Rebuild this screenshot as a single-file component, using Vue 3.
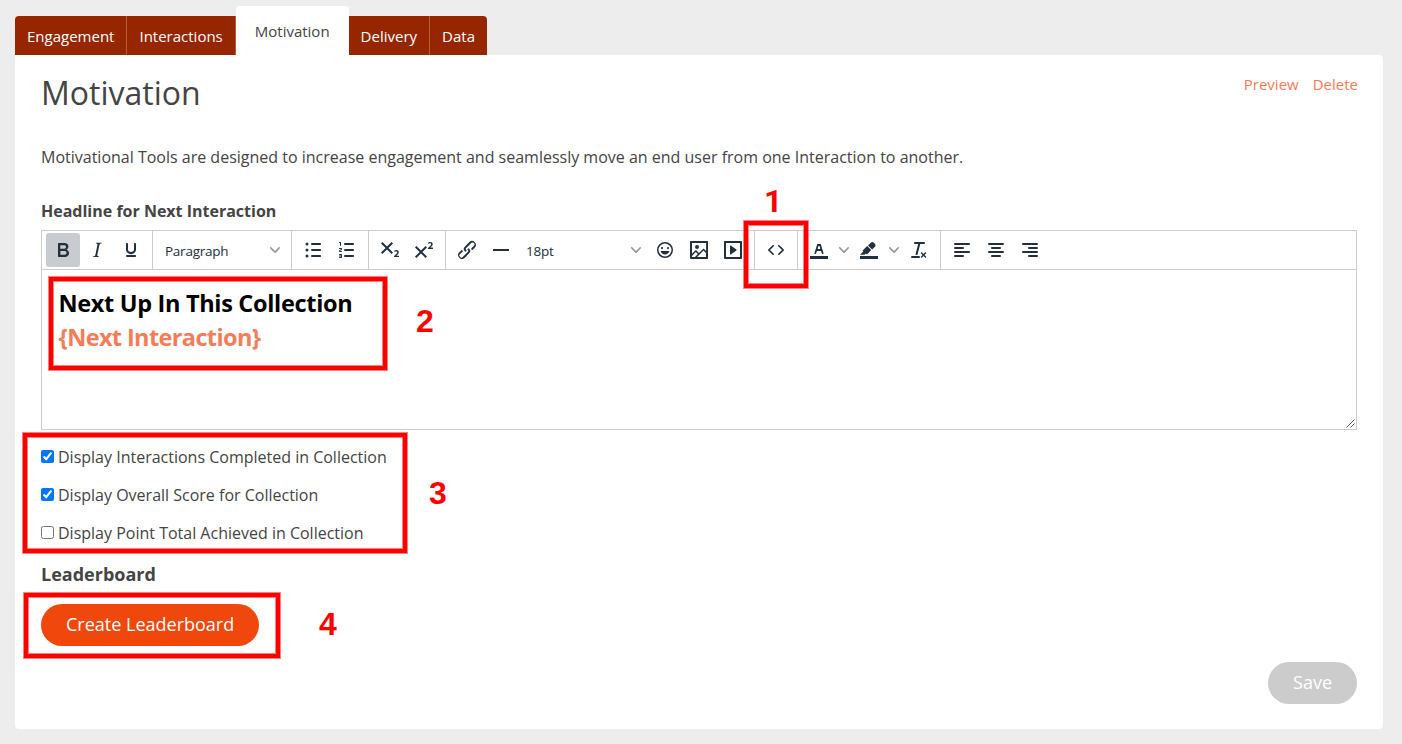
<script setup>
import { ref } from 'vue';

const tabs = ['Engagement', 'Interactions', 'Motivation', 'Delivery', 'Data'];
const activeTab = ref('Motivation');

const options = ref([
    { label: 'Display Interactions Completed in Collection', checked: true },
    { label: 'Display Overall Score for Collection', checked: true },
    { label: 'Display Point Total Achieved in Collection', checked: false },
]);

const chevron = 'M8.7 2.2c.3-.3.8-.3 1 0 .4.4.4.9 0 1.2L5.7 7.8c-.3.3-.9.3-1.2 0L.2 3.4a.8.8 0 010-1.2c.3-.3.8-.3 1.1 0L5 6l3.7-3.8z';

const icons = {
    bold: 'M7.8 19c-.3 0-.5 0-.6-.2l-.2-.5V5.7c0-.2 0-.4.2-.5l.6-.2h5c1.5 0 2.7.3 3.5 1 .7.6 1.1 1.4 1.1 2.5a3 3 0 01-.6 1.9c-.4.6-1 1-1.6 1.2.4.1.9.3 1.3.6s.8.7 1 1.2c.4.4.5 1 .5 1.6 0 1.3-.4 2.3-1.3 3-.8.7-2.1 1-3.8 1H7.8zm5-8.3c.6 0 1.2-.1 1.6-.5.4-.3.6-.7.6-1.3 0-1.1-.8-1.7-2.3-1.7H9.3v3.5h3.4zm.5 6c.7 0 1.3-.1 1.7-.4.4-.4.6-.9.6-1.5s-.2-1-.7-1.4c-.4-.3-1-.4-2-.4H9.4v3.8h4z',
    italic: 'M16.7 4.7l-.1.9h-.3c-.6 0-1 0-1.4.3-.3.3-.4.6-.5 1.1l-2.1 9.8v.6c0 .5.4.8 1.4.8h.2l-.2.8H8l.2-.8h.2c1.1 0 1.8-.5 2-1.5l2-9.8.1-.5c0-.6-.4-.8-1.4-.8h-.3l.2-.9h5.8z',
    underline: 'M16 5c.6 0 1 .4 1 1v5.5a4 4 0 01-.4 1.8l-1 1.4a5.3 5.3 0 01-5.5 1 5 5 0 01-1.6-1c-.5-.4-.8-.9-1.1-1.4a4 4 0 01-.4-1.8V6c0-.6.4-1 1-1s1 .4 1 1v5.5c0 .3 0 .6.2 1l.6.7a3.3 3.3 0 002.2.8 3.4 3.4 0 002.2-.8c.3-.2.4-.5.6-.8l.2-.9V6c0-.6.4-1 1-1zM8 17h8c.6 0 1 .4 1 1s-.4 1-1 1H8a1 1 0 010-2z',
    bullets: 'M11 5h8c.6 0 1 .4 1 1s-.4 1-1 1h-8a1 1 0 010-2zm0 6h8c.6 0 1 .4 1 1s-.4 1-1 1h-8a1 1 0 010-2zm0 6h8c.6 0 1 .4 1 1s-.4 1-1 1h-8a1 1 0 010-2zM6 4.5a1.5 1.5 0 110 3 1.5 1.5 0 010-3zm0 6a1.5 1.5 0 110 3 1.5 1.5 0 010-3zm0 6a1.5 1.5 0 110 3 1.5 1.5 0 010-3z',
    numbers: 'M10 17h8c.6 0 1 .4 1 1s-.4 1-1 1h-8a1 1 0 010-2zm0-6h8c.6 0 1 .4 1 1s-.4 1-1 1h-8a1 1 0 010-2zm0-6h8c.6 0 1 .4 1 1s-.4 1-1 1h-8a1 1 0 110-2zM6 4v3.5c0 .3-.2.5-.5.5a.5.5 0 01-.5-.5V5h-.5a.5.5 0 010-1H6zm-1 8.8l.2.2h1.3c.3 0 .5.2.5.5s-.2.5-.5.5H4.9a1 1 0 01-.9-1V13c0-.4.3-.8.6-1l1.2-.4.2-.3a.2.2 0 00-.2-.2H4.5a.5.5 0 01-.5-.5c0-.3.2-.5.5-.5h1.6c.5 0 .9.4.9 1v.1c0 .4-.3.8-.6 1l-1.2.4-.2.3zM7 17v2c0 .6-.4 1-1 1H4.5a.5.5 0 010-1h1.2c.2 0 .3-.1.3-.3 0-.2-.1-.3-.3-.3H4.4a.4.4 0 110-.8h1.3c.2 0 .3-.1.3-.3 0-.2-.1-.3-.3-.3H4.5a.5.5 0 110-1H6c.6 0 1 .4 1 1z',
    subscript: 'M10.4 10l4.6 4.6-1.4 1.4L9 11.4 4.4 16 3 14.6 7.6 10 3 5.4 4.4 4 9 8.6 13.6 4 15 5.4 10.4 10zM21 19h-5v-1l1-.8 1.7-1.6c.3-.4.5-.8.5-1.2 0-.3 0-.6-.2-.7-.2-.2-.5-.3-.9-.3a2 2 0 00-.8.2l-.7.3-.4-1.1 1-.6 1.2-.2c.8 0 1.4.3 1.8.7.4.4.6.9.6 1.5s-.2 1.1-.5 1.6a8 8 0 01-1.3 1.3l-.6.6h2.6V19z',
    superscript: 'M15 9.4L10.4 14l4.6 4.6-1.4 1.4L9 15.4 4.4 20 3 18.6 7.6 14 3 9.4 4.4 8 9 12.6 13.6 8 15 9.4zm5.9 1.6h-5v-1l1-.8 1.7-1.6c.3-.5.5-.9.5-1.3 0-.3 0-.5-.2-.7-.2-.2-.5-.3-.9-.3l-.8.2-.7.4-.4-1.2c.2-.2.5-.4 1-.5.3-.2.8-.2 1.2-.2.8 0 1.4.2 1.8.6.4.4.6 1 .6 1.6 0 .5-.2 1-.5 1.5l-1.3 1.4-.6.5h2.6V11z',
    link: 'M6.2 12.3a1 1 0 011.4 1.4l-2.1 2a2 2 0 102.7 2.8l4.8-4.8a1 1 0 000-1.4 1 1 0 111.4-1.3 2.9 2.9 0 010 4L9.6 20a3.9 3.9 0 01-5.5-5.5l2-2zm11.6-.6a1 1 0 01-1.4-1.4l2-2a2 2 0 10-2.6-2.8L11 10.3a1 1 0 000 1.4A1 1 0 119.6 13a2.9 2.9 0 010-4L14.4 4a3.9 3.9 0 015.5 5.5l-2 2z',
    line: 'M4 11h16v2H4z',
    emoji: 'M9 11c.6 0 1-.4 1-1s-.4-1-1-1a1 1 0 00-1 1c0 .6.4 1 1 1zm6 0c.6 0 1-.4 1-1s-.4-1-1-1a1 1 0 00-1 1c0 .6.4 1 1 1zm-3 5.5c2.1 0 4-1.5 4.4-3.5H7.6c.5 2 2.3 3.5 4.4 3.5zM12 4a8 8 0 100 16 8 8 0 000-16zm0 14.5a6.5 6.5 0 110-13 6.5 6.5 0 010 13z',
    image: 'M5 15.7l3.3-3.2c.3-.3.7-.3 1 0L12 15l4.1-4c.3-.4.8-.4 1 0l2 1.9V5H5v10.7zM5 18V19h3l2.8-2.9-2-2L5 17.9zm14-3l-2.5-2.4-6.4 6.5H19v-4zM4 3h16c.6 0 1 .4 1 1v16c0 .6-.4 1-1 1H4a1 1 0 01-1-1V4c0-.6.4-1 1-1zm6 8a2 2 0 100-4 2 2 0 000 4z',
    media: 'M4 3h16c.6 0 1 .4 1 1v16c0 .6-.4 1-1 1H4a1 1 0 01-1-1V4c0-.6.4-1 1-1zm1 2v14h14V5H5zm4.8 2.6l5.6 4a.5.5 0 010 .8l-5.6 4A.5.5 0 019 16V8a.5.5 0 01.8-.4z',
    code: 'M9.8 15.7c.3.3.3.8 0 1-.3.4-.9.4-1.2 0l-4.4-4.1a.8.8 0 010-1.2l4.4-4.2c.3-.3.9-.3 1.2 0 .3.3.3.8 0 1.1L6 12l3.8 3.7zM14.2 15.7c-.3.3-.3.8 0 1 .4.4.9.4 1.2 0l4.4-4.1c.3-.3.3-.9 0-1.2l-4.4-4.2a.8.8 0 00-1.2 0c-.3.3-.3.8 0 1.1L18 12l-3.8 3.7z',
    color: 'M3 18h18v3H3zM8.7 16h-.8a.5.5 0 01-.5-.6l2.7-9c.1-.3.3-.4.5-.4h2.8c.2 0 .4.1.5.4l2.7 9a.5.5 0 01-.5.6h-.8a.5.5 0 01-.4-.4l-.7-2.2c0-.3-.3-.4-.5-.4h-3.4c-.2 0-.4.1-.5.4l-.7 2.2c0 .3-.2.4-.4.4zm2.6-7.6l-.6 2a.5.5 0 00.5.6h1.6a.5.5 0 00.5-.6l-.6-2c0-.3-.3-.4-.5-.4h-.4c-.2 0-.4.1-.5.4z',
    highlight: 'M3 18h18v3H3zM7.7 16.7H3l3.3-3.3-.7-.8L10.2 8l4 4.1-4 4.2c-.2.2-.6.2-.8 0l-.6-.7-1.1 1.1zm5-7.5L11 7.4l3-2.9a2 2 0 012.6 0L18 6c.7.7.7 2 0 2.7l-2.9 2.9-1.8-1.8-.5-.6',
    clear: 'M13.2 6a1 1 0 010 .2l-2.6 10a1 1 0 01-1 .8h-.2a.8.8 0 01-.8-1l2.6-10H8a1 1 0 110-2h9a1 1 0 010 2h-3.8zM5 18h7a1 1 0 010 2H5a1 1 0 010-2zm13 1.5L16.5 18 15 19.5a.7.7 0 01-1-1l1.5-1.5-1.5-1.5a.7.7 0 011-1l1.5 1.5 1.5-1.5a.7.7 0 011 1L17.5 17l1.5 1.5a.7.7 0 01-1 1z',
    left: 'M5 5h14a1 1 0 010 2H5a1 1 0 110-2zm0 4h8a1 1 0 010 2H5a1 1 0 110-2zm0 4h14a1 1 0 010 2H5a1 1 0 110-2zm0 4h8a1 1 0 010 2H5a1 1 0 110-2z',
    center: 'M5 5h14a1 1 0 010 2H5a1 1 0 110-2zm3 4h8a1 1 0 010 2H8a1 1 0 110-2zm-3 4h14a1 1 0 010 2H5a1 1 0 110-2zm3 4h8a1 1 0 010 2H8a1 1 0 110-2z',
    right: 'M5 5h14a1 1 0 010 2H5a1 1 0 110-2zm6 4h8a1 1 0 010 2h-8a1 1 0 110-2zm-6 4h14a1 1 0 010 2H5a1 1 0 110-2zm6 4h8a1 1 0 010 2h-8a1 1 0 110-2z',
};

const groups = [
    [{ icon: 'bold', on: true }, { icon: 'italic' }, { icon: 'underline' }],
    [{ select: 'Paragraph' }],
    [{ icon: 'bullets' }, { icon: 'numbers' }],
    [{ icon: 'subscript' }, { icon: 'superscript' }],
    [{ icon: 'link' }, { icon: 'line' }, { select: '18pt' }, { icon: 'emoji' }, { icon: 'image' }, { icon: 'media' }],
    [{ icon: 'code' }],
    [{ icon: 'color', split: true }, { icon: 'highlight', split: true }, { icon: 'clear' }],
    [{ icon: 'left' }, { icon: 'center' }, { icon: 'right' }],
];
</script>

<template>
    <div class="page">
        <nav class="tabs">
            <a v-for="tab in tabs" :key="tab" class="tab" :class="{ active: tab === activeTab }"
                @click="activeTab = tab">{{ tab }}</a>
        </nav>

        <main class="panel">
            <header class="head">
                <h1>Motivation</h1>
                <div class="links"><a>Preview</a><a>Delete</a></div>
            </header>
            <p class="intro">Motivational Tools are designed to increase engagement and seamlessly move an end user from one Interaction to another.</p>

            <h2 class="label">Headline for Next Interaction</h2>
            <div class="editor">
                <div class="toolbar">
                    <div v-for="(group, g) in groups" :key="g" class="group">
                        <template v-for="(item, i) in group" :key="i">
                            <div v-if="item.select" class="select">
                                <span>{{ item.select }}</span>
                                <svg class="chevron" width="10" height="10"><path :d="chevron" /></svg>
                            </div>
                            <button v-else class="tool" :class="{ on: item.on }">
                                <svg width="24" height="24"><path :d="icons[item.icon]" fill-rule="evenodd" /></svg>
                            </button>
                            <span v-if="item.split" class="split">
                                <svg class="chevron" width="10" height="10"><path :d="chevron" /></svg>
                            </span>
                        </template>
                    </div>
                </div>
                <div class="content">
                    <p class="next-up">Next Up In This Collection</p>
                    <p class="token">{Next Interaction}</p>
                </div>
                <svg class="grip" width="9" height="9"><path d="M0.5 8.5l8-8M4.5 8.5l4-4" /></svg>
            </div>

            <div class="options">
                <label v-for="option in options" :key="option.label" class="option">
                    <input type="checkbox" v-model="option.checked" />
                    <span>{{ option.label }}</span>
                </label>
            </div>

            <h2 class="label leaderboard">Leaderboard</h2>
            <button class="pill create">Create Leaderboard</button>
            <footer class="foot"><button class="pill save">Save</button></footer>
        </main>

        <!-- numbered callouts over the form -->
        <div class="mark mark-1"></div>
        <div class="mark mark-2"></div>
        <div class="mark mark-3"></div>
        <div class="mark mark-4"></div>
        <span class="num num-1">1</span>
        <span class="num num-2">2</span>
        <span class="num num-3">3</span>
        <span class="num num-4">4</span>
    </div>
</template>

<style>
body {
    background: #ededed;
}
</style>

<style scoped>
.page {
    position: relative;
    box-sizing: border-box;
    width: 1402px;
    height: 744px;
    padding: 6px 19px 15px 15px;
    overflow: hidden;
    background: #ededed;
    color: #444;
    font-family: 'Open Sans', 'Noto Sans', sans-serif;
    font-size: 16px;
}

h1, h2, p {
    margin: 0;
}

.tabs {
    display: flex;
    align-items: flex-end;
    height: 49px;
}

.tab {
    box-sizing: border-box;
    height: 39px;
    padding: 0 12px;
    border-right: 1px solid #b2613f;
    background: #962600;
    color: #fff;
    font-size: 15px;
    line-height: 41px;
    cursor: pointer;
}

.tab:first-child {
    border-top-left-radius: 4px;
}

.tab:last-child {
    border-right: 0;
    border-top-right-radius: 4px;
}

.tab.active {
    height: 49px;
    padding: 0 19px;
    border-right: 0;
    border-radius: 4px 4px 0 0;
    background: #fff;
    color: #444;
    line-height: 51px;
}

.panel {
    box-sizing: border-box;
    height: 674px;
    padding: 15px 26px 26px;
    border-radius: 0 4px 4px 4px;
    background: #fff;
}

.head {
    display: flex;
    justify-content: space-between;
    height: 76px;
}

h1 {
    font-size: 32px;
    font-weight: 400;
    line-height: 46px;
}

.links {
    display: flex;
    gap: 14px;
    margin-right: -1px;
    color: #f47c57;
    font-size: 15px;
    line-height: 29px;
}

.intro {
    height: 54px;
    line-height: 22px;
}

.label {
    height: 30px;
    font-size: 16px;
    font-weight: 700;
    line-height: 22px;
}

.editor {
    position: relative;
    box-sizing: border-box;
    height: 200px;
    border: 1px solid #ccc;
}

.toolbar {
    display: flex;
    height: 38px;
    border-bottom: 1px solid #ccc;
}

.group {
    display: flex;
    align-items: center;
    padding: 0 4px;
    border-right: 1px solid #ccc;
}

.group:last-child {
    border-right: 0;
}

.tool {
    display: flex;
    align-items: center;
    justify-content: center;
    width: 34px;
    height: 34px;
    padding: 0;
    border: 0;
    border-radius: 3px;
    background: none;
    fill: #222f3e;
}

.tool.on {
    background: #c8cbcf;
}

.select {
    box-sizing: border-box;
    display: flex;
    align-items: center;
    justify-content: space-between;
    width: 130px;
    padding: 0 7px 0 8px;
    color: #222f3e;
    font-size: 13.5px;
    letter-spacing: -0.25px;
}

.select span {
    padding-top: 1px;
}

.split {
    display: flex;
    justify-content: center;
    width: 16px;
}

.chevron {
    fill: #9297a0;
}

.content {
    padding: 16px 16px 16px 16.5px;
    font-size: 23.5px;
    font-weight: 700;
    line-height: 34px;
}

.next-up {
    color: #000;
    letter-spacing: -0.32px;
}

.token {
    color: #f47c57;
    letter-spacing: -0.62px;
}

.grip {
    position: absolute;
    right: 1px;
    bottom: 1px;
    fill: none;
    stroke: #555;
}

.options {
    display: flex;
    flex-direction: column;
    gap: 16px;
    padding-top: 16px;
}

.option {
    display: flex;
    align-items: center;
    gap: 4px;
    height: 22px;
}

.option input {
    width: 13px;
    height: 13px;
    margin: 0 0 2px;
}

.leaderboard {
    height: 41px;
    margin-top: 19px;
    font-size: 18px;
}

.pill {
    display: block;
    height: 42px;
    padding: 0 25px 2px;
    border: 0;
    border-radius: 21px;
    color: #fff;
    font-family: inherit;
    font-size: 18px;
}

.create {
    background: #f0470c;
}

.foot {
    display: flex;
    justify-content: flex-end;
    margin-top: 16px;
}

.save {
    background: #ccc;
}

/* 4px red frame with a soft pixel on both edges */
.mark {
    position: absolute;
    box-sizing: border-box;
    border: 4px solid #f00;
    box-shadow: 0 0 0 1px #ff8080, inset 0 0 0 1px #ff8080;
    pointer-events: none;
}

.mark-1 {
    left: 744px;
    top: 221px;
    width: 64px;
    height: 67px;
}

.mark-2 {
    left: 49px;
    top: 277px;
    width: 338px;
    height: 93px;
}

.mark-3 {
    left: 23px;
    top: 433px;
    width: 384px;
    height: 120px;
}

.mark-4 {
    left: 24px;
    top: 593px;
    width: 256px;
    height: 65px;
}

.num {
    position: absolute;
    color: #f00;
    font: bold 32px/32px 'Liberation Sans', Arial, sans-serif;
}

.num-1 {
    left: 764px;
    top: 185px;
    font-family: Roboto, sans-serif;
}

.num-2 {
    left: 416px;
    top: 305px;
}

.num-3 {
    left: 429px;
    top: 477px;
}

.num-4 {
    left: 319px;
    top: 608px;
}
</style>
